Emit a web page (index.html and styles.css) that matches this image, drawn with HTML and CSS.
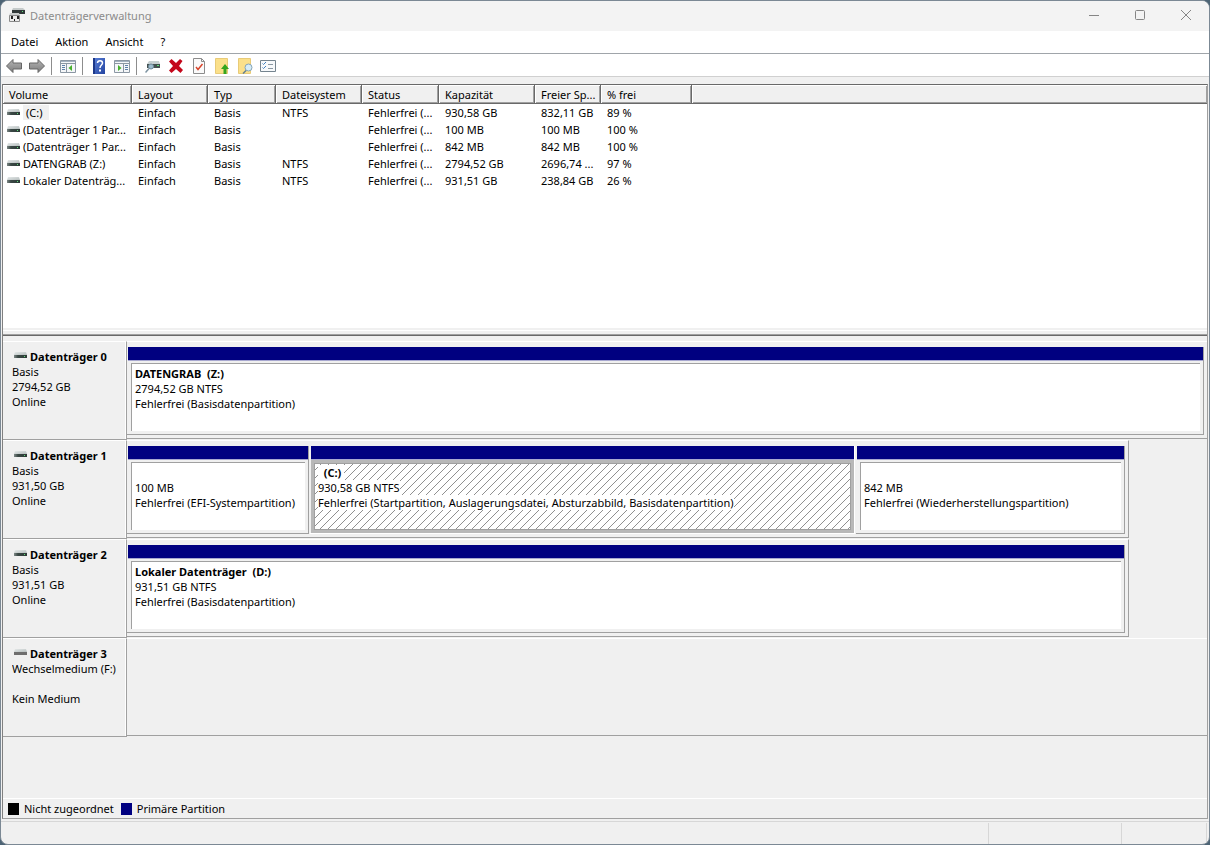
FILE: index.html
```html
<!DOCTYPE html>
<html lang="de">
<head>
    <meta charset="UTF-8">
    <meta name="viewport" content="width=device-width, initial-scale=1.0">
    <title>Datenträgerverwaltung</title>
    <link rel="stylesheet" href="styles.css">
</head>
<body>
    <!-- shared drive icons -->
    <svg class="defs" width="0" height="0">
        <defs>
            <linearGradient id="lid" x1="0" y1="0" x2="1" y2="1">
                <stop offset="0" stop-color="#e6eaea"/>
                <stop offset="1" stop-color="#b4bcbc"/>
            </linearGradient>
            <linearGradient id="front" x1="0" y1="0" x2="1" y2="0">
                <stop offset="0" stop-color="#7d8886"/>
                <stop offset="0.300" stop-color="#3a4845"/>
                <stop offset="1" stop-color="#2c3a36"/>
            </linearGradient>
            <linearGradient id="arrow" x1="0" y1="0" x2="0" y2="1">
                <stop offset="0" stop-color="#b5b5b5"/>
                <stop offset="1" stop-color="#7c7c7c"/>
            </linearGradient>
            <linearGradient id="book" x1="0" y1="0" x2="1" y2="1">
                <stop offset="0" stop-color="#5a80d8"/>
                <stop offset="1" stop-color="#2444a0"/>
            </linearGradient>
            <symbol id="drive" viewBox="0 0 13 8">
                <path d="M1 1h11l1 3H0z" fill="url(#lid)"/>
                <path d="M0 4h13v3H0z" fill="url(#front)"/>
                <path d="M10 5h1v1h-1z" fill="#5fe07a"/>
            </symbol>
            <symbol id="drive-empty" viewBox="0 0 13 8">
                <path d="M1 1h11l1 3H0z" fill="url(#lid)"/>
                <path d="M0 4h13v3H0z" fill="#6e6e6e"/>
            </symbol>
        </defs>
    </svg>

    <div class="window">
        <header class="titlebar">
            <svg class="app-icon" width="16" height="16" viewBox="0 0 16 16">
                <path d="M4 1h10l2 2H3z" fill="#c5caca"/>
                <path d="M3 3h13v4H3z" fill="#303838"/>
                <path d="M13 4h1v1h-1z" fill="#5fe07a"/>
                <path d="M1 6h9l1 3H0z" fill="#c9cccc"/>
                <path d="M.5 8.500h10v6H.5z" fill="#ececec" stroke="#8a8a8a"/>
                <path d="M2 9h2v3H2zM8 9h2v3H8zM5 12h1v2H5z" fill="#222"/>
            </svg>
            <h1 class="title">Datenträgerverwaltung</h1>
            <div class="window-buttons">
                <button type="button" aria-label="Minimieren"><svg width="12" height="12"><path d="M1 6.500h10"/></svg></button>
                <button type="button" aria-label="Maximieren"><svg width="12" height="12"><rect x="1.500" y="1.500" width="9" height="9" rx="1"/></svg></button>
                <button type="button" aria-label="Schließen"><svg width="12" height="12"><path d="M1 1l10 10M11 1L1 11"/></svg></button>
            </div>
        </header>

        <nav class="menubar">
            <button type="button">Datei</button>
            <button type="button">Aktion</button>
            <button type="button">Ansicht</button>
            <button type="button">?</button>
        </nav>

        <div class="toolbar">
            <button type="button" aria-label="Zurück"><svg width="16" height="16" viewBox="0 0 16 16"><path d="M.5 8L7 1.500V5h8.500v6H7v3.500z" fill="url(#arrow)" stroke="#666"/></svg></button>
            <button type="button" aria-label="Vorwärts"><svg width="16" height="16" viewBox="0 0 16 16"><path d="M15.500 8L9 1.500V5H.5v6H9v3.500z" fill="url(#arrow)" stroke="#666"/></svg></button>
            <span class="separator"></span>
            <button type="button" aria-label="Konsolenstruktur"><svg width="16" height="16" viewBox="0 0 16 16">
                <path d="M.5 2.500h15v12H.5z" fill="#f4f6f8" stroke="#8b97a3"/>
                <path d="M1 3h14v1H1z" fill="#a3b1bf"/>
                <path d="M1 5.500h14M6.500 6v8" stroke="#8b97a3"/>
                <path d="M2 7.500h3M2 9.500h3M2 11.500h3" stroke="#5c7fa8"/>
                <path d="M12 7v6L8.500 10z" fill="#46b02c"/>
            </svg></button>
            <span class="separator"></span>
            <button type="button" aria-label="Hilfe"><svg width="16" height="16" viewBox="0 0 16 16">
                <path d="M2 0h12v16H2z" fill="url(#book)"/>
                <path d="M2 0h2v16H2z" fill="#1d3888"/>
                <path d="M6.500 5c0-3 5-3 5 0 0 2-2.500 2-2.500 5" fill="none" stroke="#fff" stroke-width="1.500"/>
                <path d="M8 11.500h2v2H8z" fill="#fff"/>
            </svg></button>
            <button type="button" aria-label="Aktionsbereich"><svg width="16" height="16" viewBox="0 0 16 16">
                <path d="M.5 2.500h15v12H.5z" fill="#f4f6f8" stroke="#8b97a3"/>
                <path d="M1 3h14v1H1z" fill="#a3b1bf"/>
                <path d="M1 5.500h14M9.500 6v8" stroke="#8b97a3"/>
                <path d="M11 7.500h3M11 9.500h3M11 11.500h3" stroke="#5c7fa8"/>
                <path d="M4 7v6l3.500-3z" fill="#46b02c"/>
            </svg></button>
            <span class="separator"></span>
            <button type="button" aria-label="Datenträger prüfen"><svg width="16" height="16" viewBox="0 0 16 16">
                <path d="M4 3h10l1 3H2z" fill="#c6cfd0"/>
                <path d="M2 6h13v4H2z" fill="#43504f"/>
                <path d="M12 7h2v1h-2z" fill="#5fe07a"/>
                <circle cx="6" cy="8.500" r="2.500" fill="#9dbccd" stroke="#6f8b9c"/>
                <path d="M4 10.500l-3.500 4" stroke="#7d93a1" stroke-width="1.500"/>
            </svg></button>
            <button type="button" aria-label="Löschen"><svg width="16" height="16" viewBox="0 0 16 16"><path d="M1 3.500L3.500 1 8 5l4-4 2.500 2L11 8l4 4-2.500 3L8 11l-4.500 4L1 12.500 5 8z" fill="#c4071b"/></svg></button>
            <button type="button" aria-label="Eigenschaften"><svg width="16" height="16" viewBox="0 0 16 16">
                <path d="M2.500.5h8l3 3v12h-11z" fill="#fafafa" stroke="#8c8c8c"/>
                <path d="M10.500.5v3h3" fill="none" stroke="#8c8c8c"/>
                <path d="M5 9l2 2.500L11.500 6" fill="none" stroke="#d8452c" stroke-width="1.500"/>
            </svg></button>
            <button type="button" aria-label="Nach oben"><svg width="16" height="16" viewBox="0 0 16 16">
                <path d="M1.500.5h12v15h-12z" fill="#fbe08a" stroke="#e8cb78"/>
                <path d="M11 6l4 5h-2.500v5h-3v-5H7z" fill="#35a51e"/>
            </svg></button>
            <button type="button" aria-label="Suchen"><svg width="16" height="16" viewBox="0 0 16 16">
                <path d="M1.500.5h12v15h-12z" fill="#fbe08a" stroke="#e8cb78"/>
                <path d="M9.500 12L6 15.500" stroke="#64808f" stroke-width="1.500"/>
                <circle cx="11.500" cy="9.500" r="3.500" fill="#d6ecf7" stroke="#86a5b7"/>
            </svg></button>
            <button type="button" aria-label="Ansicht anpassen"><svg width="16" height="16" viewBox="0 0 16 16">
                <path d="M.5 2.500h15v11H.5z" fill="#f7f9fb" stroke="#75848f"/>
                <path d="M2.500 5.500l1 1L6 4M2.500 9.500l1 1L6 8" fill="none" stroke="#3f7fc0"/>
                <path d="M8 6.500h5M8 10.500h5" stroke="#8a98a3"/>
            </svg></button>
        </div>

        <main class="content">
            <section class="volumes">
                <table>
                    <colgroup>
                        <col class="c-volume"><col class="c-layout"><col class="c-type"><col class="c-fs"><col class="c-status"><col class="c-capacity"><col class="c-free"><col class="c-percent"><col>
                    </colgroup>
                    <thead>
                        <tr><th>Volume</th><th>Layout</th><th>Typ</th><th>Dateisystem</th><th>Status</th><th>Kapazität</th><th>Freier Sp...</th><th>% frei</th><th></th></tr>
                    </thead>
                    <tbody>
                        <tr><td><svg class="drive"><use href="#drive"/></svg><span class="selected">(C:)</span></td><td>Einfach</td><td>Basis</td><td>NTFS</td><td>Fehlerfrei (...</td><td>930,58 GB</td><td>832,11 GB</td><td>89 %</td><td></td></tr>
                        <tr><td><svg class="drive"><use href="#drive"/></svg>(Datenträger 1 Par...</td><td>Einfach</td><td>Basis</td><td></td><td>Fehlerfrei (...</td><td>100 MB</td><td>100 MB</td><td>100 %</td><td></td></tr>
                        <tr><td><svg class="drive"><use href="#drive"/></svg>(Datenträger 1 Par...</td><td>Einfach</td><td>Basis</td><td></td><td>Fehlerfrei (...</td><td>842 MB</td><td>842 MB</td><td>100 %</td><td></td></tr>
                        <tr><td><svg class="drive"><use href="#drive"/></svg>DATENGRAB (Z:)</td><td>Einfach</td><td>Basis</td><td>NTFS</td><td>Fehlerfrei (...</td><td>2794,52 GB</td><td>2696,74 ...</td><td>97 %</td><td></td></tr>
                        <tr><td><svg class="drive"><use href="#drive"/></svg>Lokaler Datenträg...</td><td>Einfach</td><td>Basis</td><td>NTFS</td><td>Fehlerfrei (...</td><td>931,51 GB</td><td>238,84 GB</td><td>26 %</td><td></td></tr>
                    </tbody>
                </table>
            </section>

            <div class="splitter"></div>

            <section class="disks">
                <div class="disk">
                    <div class="disk-label">
                        <h2><svg class="drive"><use href="#drive"/></svg>Datenträger 0</h2>
                        <p>Basis</p>
                        <p>2794,52 GB</p>
                        <p>Online</p>
                    </div>
                    <div class="disk-map full">
                        <div class="partition">
                            <div class="bar"></div>
                            <div class="info"><h3>DATENGRAB&nbsp; (Z:)</h3><p>2794,52 GB NTFS</p><p>Fehlerfrei (Basisdatenpartition)</p></div>
                        </div>
                    </div>
                </div>
                <div class="disk">
                    <div class="disk-label">
                        <h2><svg class="drive"><use href="#drive"/></svg>Datenträger 1</h2>
                        <p>Basis</p>
                        <p>931,50 GB</p>
                        <p>Online</p>
                    </div>
                    <div class="disk-map">
                        <div class="partition efi">
                            <div class="bar"></div>
                            <div class="info"><h3>&nbsp;</h3><p>100 MB</p><p>Fehlerfrei (EFI-Systempartition)</p></div>
                        </div>
                        <div class="partition active">
                            <div class="bar"></div>
                            <div class="info"><h3>&nbsp; (C:)</h3><p>930,58 GB NTFS</p><p>Fehlerfrei (Startpartition, Auslagerungsdatei, Absturzabbild, Basisdatenpartition)</p></div>
                        </div>
                        <div class="partition recovery">
                            <div class="bar"></div>
                            <div class="info"><h3>&nbsp;</h3><p>842 MB</p><p>Fehlerfrei (Wiederherstellungspartition)</p></div>
                        </div>
                    </div>
                </div>
                <div class="disk">
                    <div class="disk-label">
                        <h2><svg class="drive"><use href="#drive"/></svg>Datenträger 2</h2>
                        <p>Basis</p>
                        <p>931,51 GB</p>
                        <p>Online</p>
                    </div>
                    <div class="disk-map">
                        <div class="partition">
                            <div class="bar"></div>
                            <div class="info"><h3>Lokaler Datenträger&nbsp; (D:)</h3><p>931,51 GB NTFS</p><p>Fehlerfrei (Basisdatenpartition)</p></div>
                        </div>
                    </div>
                </div>
                <div class="disk">
                    <div class="disk-label">
                        <h2><svg class="drive"><use href="#drive-empty"/></svg>Datenträger 3</h2>
                        <p>Wechselmedium (F:)</p>
                        <p>&nbsp;</p>
                        <p>Kein Medium</p>
                    </div>
                    <div class="disk-map full"></div>
                </div>
            </section>

            <div class="legend">
                <span class="swatch unallocated"></span>Nicht zugeordnet
                <span class="swatch primary"></span>Primäre Partition
            </div>
        </main>

        <footer class="statusbar"><span></span><span></span><span></span></footer>
    </div>
</body>
</html>
```
FILE: styles.css
```css
* {
    box-sizing: border-box;
}
body {
    margin: 0;
    background-color: #4d6475;
    font-family: "Noto Sans", "Open Sans", sans-serif;
    font-size: 11px;
    line-height: 15px;
    color: #000;
}
h1, h2, h3, p {
    margin: 0;
    font-size: inherit;
}
button {
    font: inherit;
    color: inherit;
    background: none;
    border: none;
    padding: 0;
}
.defs {
    position: absolute;
}
.window {
    display: flex;
    flex-direction: column;
    min-height: 100vh;
    background-color: #f0f0f0;
    border: 1px solid #7b8894;
    border-radius: 8px;
    overflow: hidden;
}

/* title bar */
.titlebar {
    display: flex;
    align-items: center;
    height: 30px;
    padding: 0 0 2px 8px;
    background-color: #f3f3f3;
    color: #8b8b8b;
}
.title {
    margin-left: 5px;
    font-weight: normal;
}
.window-buttons {
    display: flex;
    margin-left: auto;
}
.window-buttons button {
    display: flex;
    align-items: center;
    justify-content: center;
    width: 46px;
    height: 28px;
}
.window-buttons svg {
    fill: none;
    stroke: #858585;
}

/* menu and toolbar */
.menubar {
    display: flex;
    gap: 17px;
    height: 23px;
    padding: 0 10px 2px;
    background-color: #fff;
    border-bottom: 1px solid #a0a5aa;
}
.toolbar {
    display: flex;
    align-items: center;
    gap: 7px;
    height: 23px;
    padding: 2px 5px 0;
    background-color: #fff;
    border-bottom: 1px solid #d0d0d0;
}
.toolbar button {
    display: flex;
}
.separator {
    width: 1px;
    height: 18px;
    margin: 0 1px 0 -1px;
    background-color: #8d8d8d;
}

/* volume list */
.content {
    flex: 1;
    display: flex;
    flex-direction: column;
    margin: 7px 1px 2px;
    border: 1px solid #a0a0a0;
    border-top: 1px solid #696969;
    border-left-color: #808080;
}
.volumes {
    flex: 0 0 243px;
    background-color: #fff;
}
.volumes table {
    width: 100%;
    table-layout: fixed;
    border-collapse: separate;
    border-spacing: 0;
}
.c-volume {
    width: 129px;
}
.c-layout {
    width: 76px;
}
.c-type {
    width: 68px;
}
.c-fs {
    width: 86px;
}
.c-status {
    width: 77px;
}
.c-capacity {
    width: 96px;
}
.c-free {
    width: 66px;
}
.c-percent {
    width: 91px;
}
.volumes th,
.volumes td {
    padding: 0 0 0 6px;
    text-align: left;
    font-weight: normal;
    white-space: nowrap;
}
.volumes th {
    height: 19px;
    background-color: #f0f0f0;
    border-right: 1px solid #696969;
    border-bottom: 1px solid #696969;
    box-shadow: inset 1px 1px #fff, inset -1px -1px #a0a0a0;
}
.volumes th:last-child {
    border-right: none;
}
.volumes td {
    height: 17px;
}
.volumes td:first-child {
    padding-left: 4px;
}
.drive {
    width: 13px;
    height: 8px;
    margin-right: 3px;
    vertical-align: 1px;
}
.selected {
    display: inline-block;
    padding: 0 6px 0 3px;
    background-color: #f0f0f0;
}
.splitter {
    height: 8px;
    background: linear-gradient(#f0f0f0 2px, #fff 2px 3px, #f0f0f0 3px 6px, #a0a0a0 6px 7px, #696969 7px);
}

/* graphical view */
.disks {
    flex: 1;
    padding-top: 5px;
}
.disk {
    display: flex;
    height: 99px;
}
.disk-label {
    flex: 0 0 124px;
    padding: 7px 8px 0 9px;
    border-top: 1px solid #fff;
    border-right: 1px solid #a0a0a0;
    border-bottom: 1px solid #a0a0a0;
    box-shadow: inset -1px 0 #fff;
    white-space: nowrap;
    overflow: hidden;
}
.disk-label p {
    overflow: hidden;
}
.disk-label h2 .drive {
    margin-left: 2px;
    vertical-align: 2px;
}
.disk-map {
    flex: 0 1 1002px;
    display: flex;
    gap: 1px;
    height: 98px;
    padding: 5px 3px 3px 0;
    border-top: 1px solid #fff;
    border-right: 1px solid #a0a0a0;
    border-bottom: 1px solid #a0a0a0;
}
.disk-map.full {
    flex: 1;
    border-right: none;
}
.partition {
    flex: 1;
    display: flex;
    flex-direction: column;
    padding-left: 1px;
    border-right: 1px solid #a0a0a0;
    border-bottom: 1px solid #a0a0a0;
}
.partition.efi {
    flex: 0 1 182px;
}
.partition.recovery {
    flex: 0 1 269px;
}
.bar {
    height: 14px;
    background-color: #000080;
    border-bottom: 1px solid #a8a8d0;
}
.info {
    flex: 1;
    margin: 2px 3px 3px;
    padding: 2px 3px;
    background-color: #fff;
    border-top: 1px solid #a0a0a0;
    border-left: 1px solid #a0a0a0;
    white-space: nowrap;
    overflow: hidden;
}
/* selected partition: hatched, the text lines keep a white background */
.partition.active {
    border-right-color: #fff;
    border-bottom-color: #fff;
}
.active .info {
    margin: 0;
    padding: 2px 4px;
    border: 3px solid #b8b8b8;
    box-shadow: inset 1px 1px #a0a0a0, inset -1px -1px #a0a0a0;
    background: linear-gradient(to bottom right, #fff 45%, #909090 45% 55%, #fff 55%) 0 0 / 8px 8px;
}
.active h3,
.active .info p {
    width: max-content;
    background-color: #fff;
}
.active h3 {
    padding-right: 3px;
}

/* legend and status bar */
.legend {
    display: flex;
    align-items: center;
    height: 20px;
    padding-left: 5px;
    border-top: 1px solid #fff;
}
.swatch {
    width: 11px;
    height: 12px;
    margin-right: 5px;
}
.swatch.unallocated {
    background-color: #000;
}
.swatch.primary {
    margin-left: 7px;
    background-color: #000080;
}
.statusbar {
    display: flex;
    height: 23px;
    padding-right: 2px;
    border-top: 1px solid #d7d7d7;
}
.statusbar span {
    flex: 0 0 133px;
    margin-top: 1px;
    border-right: 1px solid #d7d7d7;
}
.statusbar span:first-child {
    flex: 1;
}
.statusbar span:last-child {
    flex-basis: 85px;
}
```
